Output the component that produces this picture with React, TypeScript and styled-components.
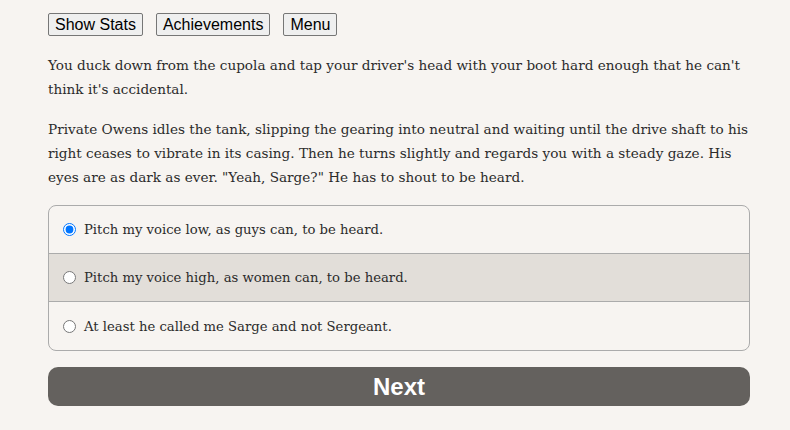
import styled, { createGlobalStyle } from "styled-components";

const GlobalStyle = createGlobalStyle`
  html, body {
    margin: 0;
    padding: 0;
    background-color: #f7f4f1;
  }
`;

const Page = styled.div`
  width: 702px;
  margin-left: 48px;
  padding-top: 13px;
  font-family: "DejaVu Serif", serif;
  color: #2b2b2b;
`;

const Toolbar = styled.div`
  display: flex;
  gap: 13px;
  padding-bottom: 1px;
`;

const ToolButton = styled.button`
  font-family: "Liberation Sans", Arial, sans-serif;
  font-size: 16px;
  height: 23px;
  padding: 0 6px;
  background: #efefef;
  border: 1px solid #767676;
  border-radius: 2px;
  color: #000;
`;

const Text = styled.p`
  margin: 16px 0 0;
  font-size: 13.6px;
  line-height: 24px;
`;

const Choices = styled.div`
  margin-top: 16px;
  border: 1px solid #ababab;
  border-radius: 8px;
  overflow: hidden;
`;

const Choice = styled.label<{ $shaded?: boolean }>`
  display: flex;
  align-items: center;
  height: 47px;
  padding-left: 14px;
  font-size: 13.2px;
  background: ${(p) => (p.$shaded ? "#e2ded9" : "transparent")};
  &:last-child {
    height: 48px;
  }
  & + & {
    border-top: 1px solid #ababab;
  }
`;

const Radio = styled.input`
  width: 13px;
  height: 13px;
  margin: 0 8px 0 0;
`;

const NextButton = styled.button`
  display: block;
  width: 100%;
  height: 39px;
  margin-top: 16px;
  border: none;
  border-radius: 10px;
  background: #64615e;
  color: #fff;
  font-family: "Liberation Sans", Arial, sans-serif;
  font-weight: bold;
  font-size: 24px;
`;

const options = [
  "Pitch my voice low, as guys can, to be heard.",
  "Pitch my voice high, as women can, to be heard.",
  "At least he called me Sarge and not Sergeant.",
];

export default function App() {
  return (
    <>
      <GlobalStyle />
      <Page>
        <Toolbar>
          <ToolButton>Show Stats</ToolButton>
          <ToolButton>Achievements</ToolButton>
          <ToolButton>Menu</ToolButton>
        </Toolbar>
        <Text>
          You duck down from the cupola and tap your driver's head with your boot hard enough that he can't
          think it's accidental.
        </Text>
        <Text>
          Private Owens idles the tank, slipping the gearing into neutral and waiting until the drive shaft to his
          right ceases to vibrate in its casing. Then he turns slightly and regards you with a steady gaze. His
          eyes are as dark as ever. "Yeah, Sarge?" He has to shout to be heard.
        </Text>
        <Choices>
          {options.map((o, i) => (
            <Choice key={i} $shaded={i === 1}>
              <Radio type="radio" name="choice" defaultChecked={i === 0} />
              {o}
            </Choice>
          ))}
        </Choices>
        <NextButton>Next</NextButton>
      </Page>
    </>
  );
}
